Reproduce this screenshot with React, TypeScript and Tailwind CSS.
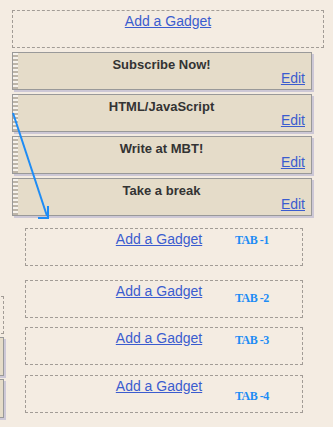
export default function App() {
  const widgets = ["Subscribe Now!", "HTML/JavaScript", "Write at MBT!", "Take a break"];
  const tabs = [
    { label: "TAB -1", mt: "mt-0", top: "top-[5px]" },
    { label: "TAB -2", mt: "mt-[14px]", top: "top-[11px]" },
    { label: "TAB -3", mt: "mt-[9px]", top: "top-[6px]" },
    { label: "TAB -4", mt: "mt-[10px]", top: "top-[14px]" },
  ];

  return (
    <div className="relative w-[333px] h-[427px] overflow-hidden bg-[#f4ece2] font-['Liberation_Sans',Arial,sans-serif]">
      <div className="pl-[12px] pt-[10px]">
        {/* top add-gadget slot */}
        <div className="w-[312px] h-[38px] border border-dashed border-[#a29c96] pt-[2px] text-center">
          <GadgetLink />
        </div>

        {/* page elements */}
        <div className="mt-[4px] flex flex-col gap-[4px]">
          {widgets.map((w) => (
            <Widget key={w} title={w} />
          ))}
        </div>
      </div>

      <div className="flex items-start mt-[12px]">
        {/* column cut off at the left */}
        <div className="shrink-0 w-[100px] -ml-[96px] pt-[68px]">
          <div className="h-[38px] border border-dashed border-[#a29c96]" />
          <div className="mt-[3px] h-[39px] border border-[#999] bg-[#e5dcc9] shadow-[2px_2px_0_#cdc8d6]" />
          <div className="mt-[3px] h-[39px] border border-[#999] bg-[#e5dcc9] shadow-[2px_2px_0_#cdc8d6]" />
        </div>

        <div className="ml-[21px] w-[278px]">
          {tabs.map((t) => (
            <div
              key={t.label}
              className={`relative h-[38px] border border-dashed border-[#a29c96] pt-[2px] pr-[10px] text-center ${t.mt}`}
            >
              <GadgetLink />
              <span
                className={`absolute left-[209px] ${t.top} text-[12px] leading-[13px] tracking-[-0.5px] font-bold text-[#1e8cf5] font-['Liberation_Serif','Times_New_Roman',serif]`}
              >
                {t.label}
              </span>
            </div>
          ))}
        </div>
      </div>

      {/* drag arrow */}
      <svg className="absolute left-0 top-0 pointer-events-none" width="333" height="427">
        <line x1="13" y1="113" x2="47" y2="216" stroke="#1e8cf5" strokeWidth="2" />
        <polyline points="38,218 48,218 48,206" fill="none" stroke="#1e8cf5" strokeWidth="2" />
      </svg>
    </div>
  );
}

function GadgetLink() {
  return (
    <div className="text-[14px] leading-[16px]">
      <a className="text-[#3b5ccf] underline cursor-pointer">Add a Gadget</a>
    </div>
  );
}

function Widget({ title }: { title: string }) {
  return (
    <div className="flex w-[300px] h-[38px] border border-[#999] bg-[#e5dcc9] shadow-[2px_2px_0_#cdc8d6]">
      <div className="w-[5px] shrink-0 bg-[repeating-linear-gradient(180deg,#f6f2ec_0_2px,#bdb5a8_2px_4px)]" />
      <div className="flex-1 flex flex-col pt-[4px] pr-[6px]">
        <div className="text-center text-[13px] leading-[15px] font-bold text-[#333]">{title}</div>
        <div className="-mt-[2px] text-right text-[14px] leading-[16px]">
          <a className="text-[#3b5ccf] underline cursor-pointer">Edit</a>
        </div>
      </div>
    </div>
  );
}
